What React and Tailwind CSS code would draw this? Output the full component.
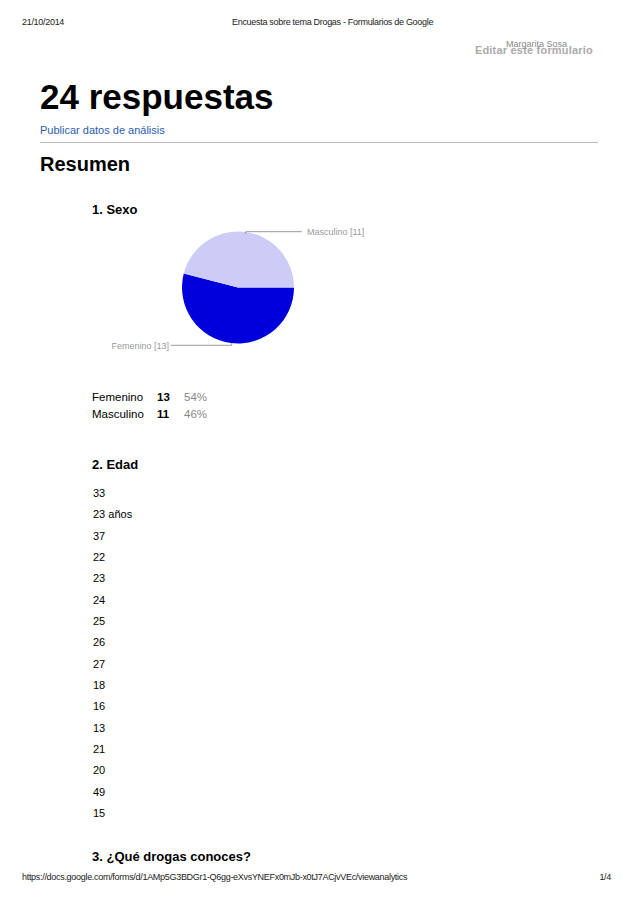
import React from 'react';

const edades = ['33', '23 años', '37', '22', '23', '24', '25', '26', '27', '18', '16', '13', '21', '20', '49', '15'];

const sexo = [
  { label: 'Femenino', count: 13, pct: '54%' },
  { label: 'Masculino', count: 11, pct: '46%' },
];

function SexoPie() {
  // centre (146, 65.5), r 56 — Femenino runs clockwise from 3 o'clock for 194.4deg
  return (
    <svg width="300" height="140" viewBox="0 0 300 140" className="block">
      <path d="M146 65.5 L202 65.5 A56 56 0 1 1 91.76 51.57 Z" fill="#0000dc" />
      <path d="M146 65.5 L91.76 51.57 A56 56 0 0 1 202 65.5 Z" fill="#ccccf7" />
      <path d="M153.7 12 L153.7 9.7 L209.7 9.7" fill="none" stroke="#999" strokeWidth="1" />
      <text x="215" y="13" fontSize="9" fill="#999" fontFamily="Liberation Sans, Arial, sans-serif">Masculino [11]</text>
      <path d="M139.7 121 L139.7 123.3 L78.7 123.3" fill="none" stroke="#999" strokeWidth="1" />
      <text x="77" y="126.5" fontSize="9" fill="#999" textAnchor="end" fontFamily="Liberation Sans, Arial, sans-serif">Femenino [13]</text>
    </svg>
  );
}

export default function App() {
  return (
    <div className="w-[638px] h-[903px] bg-white text-black font-['Liberation_Sans',Arial,sans-serif] flex flex-col overflow-hidden">
      {/* Print header */}
      <div className="flex pt-[16px] px-[22px] h-[28px] text-[9px] leading-[12px] tracking-[-0.3px] text-[#222]">
        <span className="w-[210px]">21/10/2014</span>
        <span>Encuesta sobre tema Drogas - Formularios de Google</span>
      </div>

      {/* Editar este formulario */}
      <div className="flex justify-end pr-[45px] h-[30px] leading-none">
        <div className="relative pt-[16px]">
          <span className="block text-[11px] leading-[13px] font-bold text-[#aaa] tracking-[0.2px]">Editar este formulario</span>
          <span className="absolute right-[26px] top-[11px] block text-[9px] leading-[11px] text-[#888]">Margarita Sosa</span>
        </div>
      </div>

      <div className="px-[40px]">
        <h1 className="text-[35px] leading-[40px] font-bold mt-[19px]">24 respuestas</h1>
        <a className="block text-[11px] leading-[14px] text-[#2a5db0] mt-[6px]">Publicar datos de análisis</a>
        <div className="h-px bg-[#bbb] mt-[5px]" />
        <h2 className="text-[20px] leading-[24px] font-bold mt-[9px]">Resumen</h2>
      </div>

      <div className="pl-[92px]">
        <h3 className="text-[13px] leading-[16px] font-bold mt-[26px]">1. Sexo</h3>
        <div className="mt-[4px]">
          <SexoPie />
        </div>

        <div className="mt-[27px] text-[11.5px] leading-[17px]">
          {sexo.map((s) => (
            <div key={s.label} className="flex">
              <span className="w-[65px]">{s.label}</span>
              <span className="w-[27px] font-bold">{s.count}</span>
              <span className="text-[#888]">{s.pct}</span>
            </div>
          ))}
        </div>

        <h3 className="text-[13px] leading-[16px] font-bold mt-[34px]">2. Edad</h3>
        <ul className="mt-[10px] pl-px text-[11px] leading-[21.33px]">
          {edades.map((e, i) => (
            <li key={i}>{e}</li>
          ))}
        </ul>

        <h3 className="text-[13px] leading-[16px] font-bold mt-[25px]">3. ¿Qué drogas conoces?</h3>
      </div>

      {/* Print footer */}
      <div className="flex justify-between pl-[22px] pr-[27px] mt-[6px] text-[9px] leading-[12px] tracking-[-0.3px] text-[#222]">
        <span>https://docs.google.com/forms/d/1AMp5G3BDGr1-Q6gg-eXvsYNEFx0mJb-x0tJ7ACjvVEc/viewanalytics</span>
        <span>1/4</span>
      </div>
    </div>
  );
}
